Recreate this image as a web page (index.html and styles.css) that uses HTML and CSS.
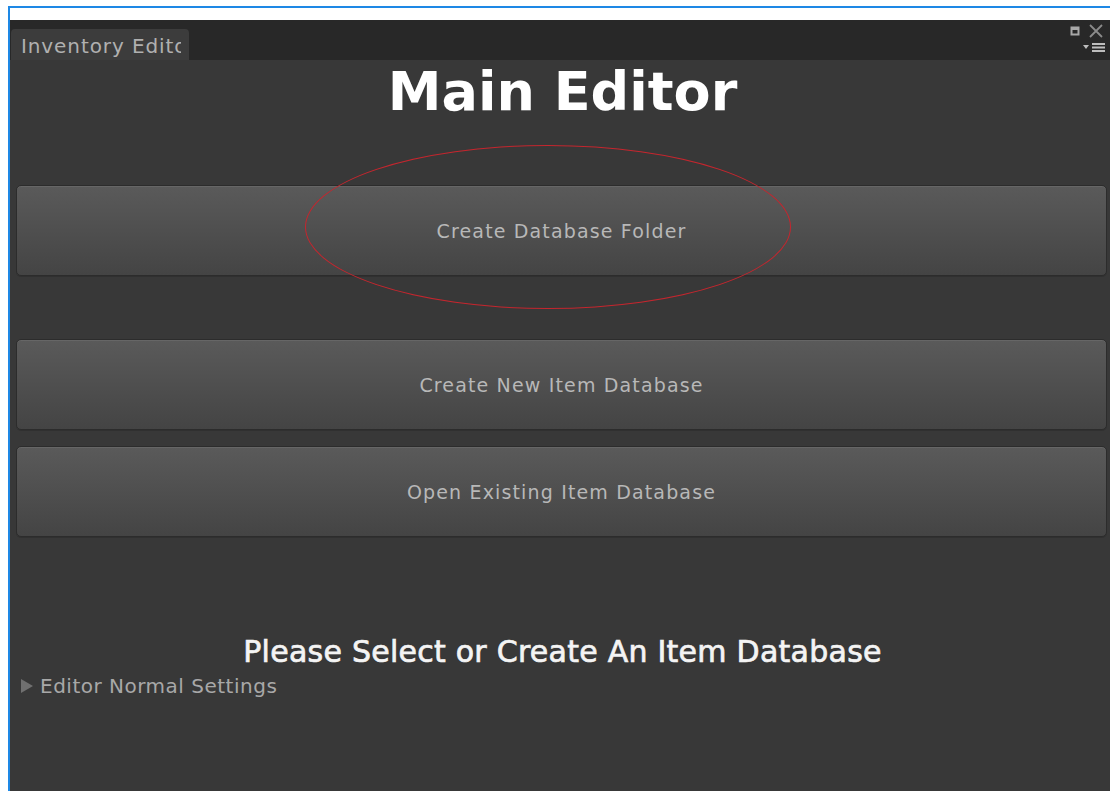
FILE: index.html
```html
<!DOCTYPE html>
<html>
<head>
<meta charset="utf-8">
<link rel="stylesheet" href="styles.css">
</head>
<body>
<div class="frame">
  <div class="strip"></div>
  <div class="window">
    <div class="tabbar">
      <div class="tab"><span class="tab-label">Inventory Editor</span></div>
      <div class="win-controls">
        <div class="ctl-row">
          <svg class="ico-max" width="10" height="10" viewBox="0 0 10 10"><rect x="1.5" y="1.5" width="7" height="7" fill="none" stroke="#a8a8a8" stroke-width="2"/><rect x="1" y="1" width="8" height="3" fill="#a8a8a8"/></svg>
          <svg class="ico-close" width="16" height="16" viewBox="0 0 16 16"><path d="M2 2 L14 14 M14 2 L2 14" stroke="#8a8a8a" stroke-width="1.8"/></svg>
        </div>
        <div class="ctl-row menu">
          <svg width="26" height="12" viewBox="0 0 26 12"><path d="M2 4 L8 4 L5 8 Z" fill="#bdbdbd"/><rect x="11" y="2" width="13" height="2" fill="#bdbdbd"/><rect x="11" y="5.5" width="13" height="2" fill="#bdbdbd"/><rect x="11" y="9" width="13" height="2" fill="#bdbdbd"/></svg>
        </div>
      </div>
    </div>
    <div class="panel">
      <h1 class="title">Main Editor</h1>
      <div class="btn-wrap first">
        <div class="btn">Create Database Folder</div>
        <div class="ring"></div>
      </div>
      <div class="btn second">Create New Item Database</div>
      <div class="btn third">Open Existing Item Database</div>
      <div class="status">Please Select or Create An Item Database</div>
      <div class="foldout"><span class="arrow"></span>Editor Normal Settings</div>
    </div>
  </div>
</div>
</body>
</html>
```
FILE: styles.css
```css
html, body {
  margin: 0;
  padding: 0;
  background: #ffffff;
  height: 100%;
  overflow: hidden;
}

.frame {
  margin: 6px 0 0 8px;
  border-top: 2px solid #1e88e5;
  border-left: 2px solid #1e88e5;
  height: 785px;
  box-sizing: border-box;
  display: flex;
  flex-direction: column;
}

.strip {
  height: 12px;
  background: #ffffff;
  flex: none;
}

.window {
  flex: 1;
  display: flex;
  flex-direction: column;
  background: #383838;
  font-family: "DejaVu Sans", Verdana, sans-serif;
}

.tabbar {
  height: 40px;
  flex: none;
  background: #282828;
  display: flex;
  align-items: flex-end;
  justify-content: space-between;
  padding-left: 1px;
}

/* the tab is narrower than its title, so the label is clipped at its right edge */
.tab {
  width: 178px;
  height: 31px;
  background: #3c3c3c;
  border-radius: 4px 4px 0 0;
  box-sizing: border-box;
  padding: 5px 0 0 10px;
  overflow: hidden;
  white-space: nowrap;
}

.tab-label {
  display: block;
  width: 160px;
  overflow: hidden;
  font-size: 20px;
  color: #b0b0b0;
  letter-spacing: 0.9px;
}

.win-controls {
  align-self: stretch;
  display: flex;
  flex-direction: column;
  align-items: flex-end;
  padding: 3px 6px 0 0;
}

.ctl-row {
  display: flex;
  align-items: center;
  gap: 8px;
}

.ctl-row.menu {
  margin-top: 2px;
  margin-right: -3px;
}

.panel {
  flex: 1;
  display: flex;
  flex-direction: column;
  padding: 0 3px 0 6px;
}

.title {
  margin: 0;
  text-align: center;
  font-size: 54px;
  font-weight: bold;
  color: #ffffff;
  line-height: 64px;
  padding-left: 2px;
}

.btn {
  height: 91px;
  box-sizing: border-box;
  border: 1px solid #2c2c2c;
  border-radius: 5px;
  background: linear-gradient(#5a5a5a, #444444);
  box-shadow: inset 0 1px 0 #666666, 0 1px 0 #303030;
  display: flex;
  align-items: center;
  justify-content: center;
  font-size: 19px;
  letter-spacing: 1.15px;
  color: #b8b8b8;
}

.btn-wrap {
  position: relative;
}

.btn-wrap.first {
  margin-top: 61px;
}

.btn.second {
  margin-top: 63px;
}

.btn.third {
  margin-top: 16px;
}

.ring {
  position: absolute;
  left: 289px;
  top: -40px;
  width: 486px;
  height: 164px;
  border: 1.2px solid #c4262e;
  border-radius: 50%;
  box-sizing: border-box;
  pointer-events: none;
}

.status {
  margin-top: 97px;
  text-align: center;
  font-size: 30px;
  color: #f4f4f4;
  letter-spacing: 0.25px;
  padding-left: 2px;
  -webkit-text-stroke: 0.7px #f4f4f4;
}

.foldout {
  margin-top: 5px;
  display: flex;
  align-items: center;
  font-size: 20px;
  color: #a8a8a8;
  letter-spacing: 0.5px;
  padding-left: 5px;
}

.arrow {
  width: 0;
  height: 0;
  border-top: 7px solid transparent;
  border-bottom: 7px solid transparent;
  border-left: 12px solid #707070;
  margin-right: 7px;
}
```
